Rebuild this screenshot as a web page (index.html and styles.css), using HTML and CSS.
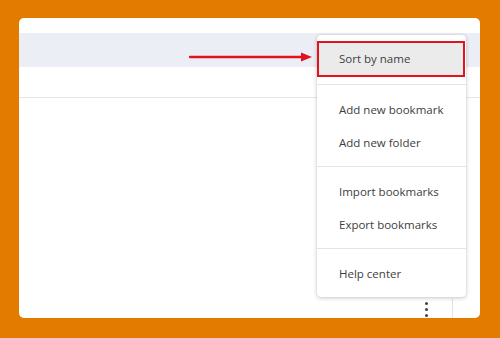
FILE: index.html
```html
<!DOCTYPE html>
<html>
<head>
<meta charset="utf-8">
<link rel="stylesheet" href="styles.css">
</head>
<body>
<div class="card">
  <div class="top-gap"></div>
  <div class="band"></div>
  <div class="subheader"></div>
  <div class="content"></div>
  <div class="footer">
    <div class="kebab"><span></span><span></span><span></span></div>
    <div class="side-col"></div>
  </div>

  <svg class="arrow" width="130" height="12" viewBox="0 0 130 12">
    <line x1="1" y1="6" x2="116" y2="6" stroke="#e0141e" stroke-width="2.4" stroke-linecap="round"/>
    <polygon points="112,1.5 123,6 112,10.5" fill="#e0141e"/>
  </svg>

  <div class="menu">
    <div class="item highlight">Sort by name</div>
    <div class="divider"></div>
    <div class="item">Add new bookmark</div>
    <div class="item">Add new folder</div>
    <div class="divider"></div>
    <div class="item">Import bookmarks</div>
    <div class="item">Export bookmarks</div>
    <div class="divider"></div>
    <div class="item">Help center</div>
  </div>
</div>
</body>
</html>
```

FILE: styles.css
```css
html, body {
  margin: 0;
  padding: 0;
}
body {
  background: #e27b00;
  width: 500px;
  height: 338px;
  padding: 18px 0 0 19px;
  box-sizing: border-box;
  font-family: "Open Sans", "Noto Sans", sans-serif;
}
.card {
  position: relative;
  width: 461px;
  height: 300px;
  background: #ffffff;
  border-radius: 5px;
  display: flex;
  flex-direction: column;
  overflow: hidden;
}
.top-gap {
  height: 15px;
}
.band {
  height: 34px;
  background: #eceef6;
}
.subheader {
  height: 30px;
  border-bottom: 1px solid #e8e8ec;
}
.content {
  flex: 1;
}
.footer {
  height: 19px;
  display: flex;
  justify-content: flex-end;
}
.kebab {
  width: 26px;
  display: flex;
  flex-direction: column;
  align-items: center;
  justify-content: center;
  gap: 3px;
  margin-right: 13px;
  padding-top: 1px;
}
.kebab span {
  width: 3px;
  height: 3px;
  border-radius: 50%;
  background: #444444;
}
.side-col {
  width: 27px;
  border-left: 1px solid #e2e2e2;
}
.arrow {
  position: absolute;
  left: 170px;
  top: 33px;
}
.menu {
  position: absolute;
  left: 298px;
  top: 17px;
  width: 149px;
  padding: 6px 0 7px;
  background: #ffffff;
  border-radius: 4px;
  box-shadow: 0 1px 4px rgba(0, 0, 0, 0.22), 0 0 1px rgba(0, 0, 0, 0.15);
}
.item {
  height: 33px;
  line-height: 33px;
  padding-left: 22px;
  font-size: 11.5px;
  color: #404040;
  white-space: nowrap;
}
.item.highlight {
  height: 32px;
  line-height: 32px;
  padding-left: 20px;
  background: #ebebeb;
  border: 2px solid #e0141e;
  margin-right: 1px;
}
.divider {
  height: 1px;
  background: #e4e4e4;
  margin: 7px 0 8px;
}
```
